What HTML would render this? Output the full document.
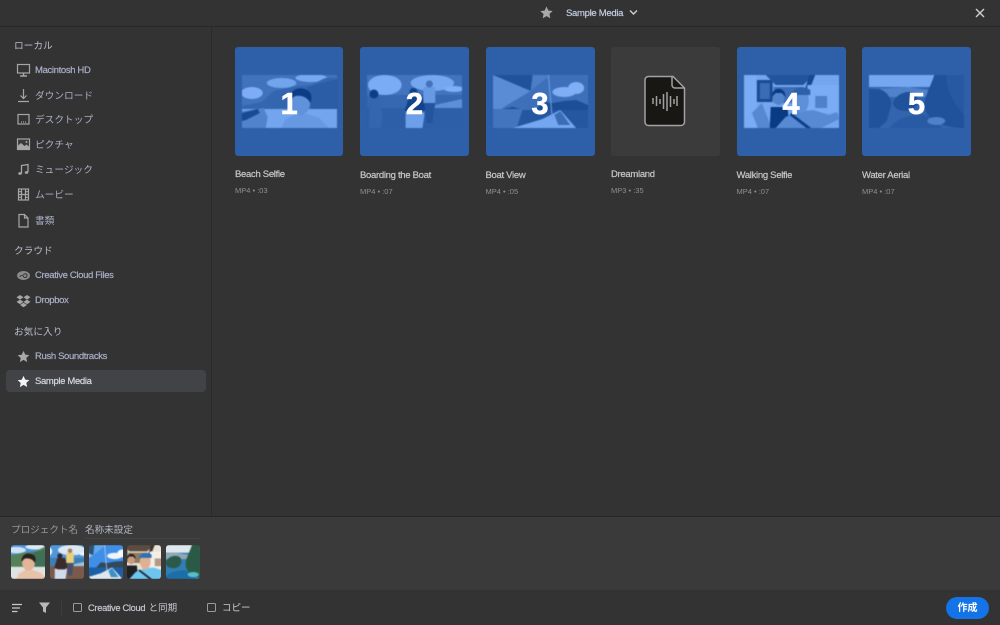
<!DOCTYPE html>
<html lang="ja"><head><meta charset="utf-8"><title>Sample Media</title>
<style>
*{box-sizing:border-box}
html,body{margin:0;padding:0;width:1000px;height:625px;overflow:hidden;background:#333}
body{position:relative;font-family:"Liberation Sans","Noto Sans CJK JP",sans-serif;color:#c6cad8}
.a{position:absolute}
.t{position:absolute;white-space:nowrap;line-height:20px;height:20px;filter:blur(.25px)}
.sec{left:14px;font-size:9.7px;color:#b9bdcb}
.row{left:35px;font-size:9.5px;color:#a9afc6;letter-spacing:-.35px;-webkit-text-stroke:.2px #a9afc6}
.jp{font-size:9.7px;letter-spacing:0;-webkit-text-stroke:0}
.ic{position:absolute;left:15px;width:17px;height:17px;fill:none;stroke:#a6a6a6;stroke-width:1.2}
.tile{position:absolute;top:47px;height:108.5px;border-radius:3px;background:#2e5fa9;isolation:isolate;overflow:hidden}
.tile svg{position:absolute;top:28px;left:7px;width:95px;height:53px;mix-blend-mode:luminosity;opacity:.88;filter:blur(.6px) contrast(.75) brightness(.83)}
.num{position:absolute;top:29.5px;height:53px;line-height:53px;left:0;right:0;text-align:center;color:#fff;font-size:31px;font-weight:bold;-webkit-text-stroke:.5px #fff}
.name{top:166px;font-size:9.5px;color:#c8c8cc;letter-spacing:-.3px;-webkit-text-stroke:.2px #c8c8cc}
.meta{top:181px;font-size:7.5px;color:#8f8f92}
.th{position:absolute;top:544.5px;width:34px;height:34px;border-radius:3px;overflow:hidden}
.th svg{width:61px;height:34px;display:block;margin-left:-14px;filter:blur(.4px)}
.cb{position:absolute;top:603px;width:9px;height:9px;border:1.2px solid #9a9a9a;border-radius:1.5px}
</style></head><body>
<svg width="0" height="0" style="position:absolute">
<defs>
<symbol id="p1" viewBox="0 0 96 53" preserveAspectRatio="none">
<rect width="96" height="53" fill="#4c93dc"/>
<ellipse cx="10" cy="18" rx="11" ry="6" fill="#eef4fa"/><ellipse cx="40" cy="8" rx="15" ry="5" fill="#cfe3f5"/><ellipse cx="70" cy="3" rx="16" ry="4" fill="#dfeaf4"/>
<path d="M0 31 L20 27 L32 16 L50 12 L70 10 L84 3 L96 3 L96 37 L0 37Z" fill="#56805a"/>
<path d="M66 12 L96 4 V35 H70Z" fill="#3f6f55"/>
<rect y="34" width="96" height="19" fill="#dfe4e2"/>
<path d="M0 36 L22 33 L26 42 L24 53 H0Z" fill="#c79a80"/><path d="M0 38 L16 34 L18 38 L4 45 L0 46Z" fill="#3a3a3a"/>
<path d="M40 53 L44 44 L54 39 L66 39 L78 43 L88 53Z" fill="#e8c3aa"/>
<ellipse cx="59" cy="27" rx="10" ry="13" fill="#e3b598"/>
<path d="M48 26 C47 14 58 11 66 15 C71 18 71 24 69 28 C66 22 60 20 54 21 C51 22 50 25 48 26Z" fill="#28221f"/>
</symbol>
<symbol id="p2" viewBox="0 0 96 53" preserveAspectRatio="none">
<rect width="96" height="53" fill="#4f97dd"/>
<ellipse cx="18" cy="10" rx="17" ry="10" fill="#e9f1f8"/><ellipse cx="66" cy="8" rx="22" ry="8" fill="#dce9f5"/><ellipse cx="88" cy="14" rx="10" ry="3" fill="#f0f5fa"/>
<rect y="20" width="96" height="14" fill="#3d7fb4"/><path d="M50 34 L96 24 V34Z" fill="#9dc2d8"/>
<rect y="33" width="96" height="20" fill="#7b5a4c"/>
<path d="M2 53 L3 22 C3 14 12 14 12 22 L16 40 L14 53Z" fill="#4c7a8c"/><circle cx="7" cy="19" r="4.5" fill="#2c2320"/>
<path d="M39 53 L39 34 L46 20 L56 22 L58 40 L56 53Z" fill="#cfdcec"/><path d="M38 36 L43 20 L55 20 L60 34 L55 38 L44 38Z" fill="#3a2b2a"/><circle cx="47" cy="17" r="4" fill="#33272a"/>
<rect x="57" y="12" width="12" height="16" fill="#e8d07a"/><path d="M58 28 H69 L66 48 H60Z" fill="#46506a"/><circle cx="63" cy="9" r="3.6" fill="#a77f63"/>
</symbol>
<symbol id="p3" viewBox="0 0 96 53" preserveAspectRatio="none">
<rect width="96" height="53" fill="#3f8fe8"/>
<path d="M0 0 H58 L38 16 L0 0Z" fill="#62a6ee"/>
<path d="M0 0 H40 L38 16 L0 0Z" fill="#2b5378"/>
<path d="M0 0 L38 16 L8 34 L0 34Z" fill="#90bde6"/>
<ellipse cx="72" cy="17" rx="12" ry="5" fill="#f0f5fa"/><ellipse cx="84" cy="13" rx="8" ry="6" fill="#f4f7fb"/>
<path d="M42 36 L50 27 L60 28 L72 26 L84 25 L96 30 V36Z" fill="#33485a"/><path d="M10 34 L20 32 L28 34Z" fill="#2a4258"/>
<rect y="35" width="96" height="18" fill="#1d5fa6"/>
<path d="M0 34 H30 L24 53 H0Z" fill="#5b96c4"/>
<path d="M20 53 L50 44 L68 35 L84 53Z" fill="#dfe7ee"/><path d="M62 40 L68 36 L78 50 L66 50Z" fill="#3a8fc4"/>
<path d="M56 0 L60 45" stroke="#d9d9d9" stroke-width="1" fill="none"/>
</symbol>
<symbol id="p4" viewBox="0 0 96 53" preserveAspectRatio="none">
<rect width="96" height="53" fill="#e9e2d6"/>
<rect x="0" y="0" width="13" height="53" fill="#f2ede5"/>
<rect x="13" y="5" width="16" height="22" fill="#3a3f3f"/><rect x="16" y="8" width="10" height="16" fill="#6b7f86"/>
<path d="M22 0 H70 L60 10 L32 10Z" fill="#5b4b40"/><path d="M66 0 H72 L64 20 H60Z" fill="#3f352e"/>
<rect x="64" y="10" width="32" height="28" fill="#f2efe8"/><rect x="72" y="21" width="12" height="12" fill="#b49a82"/>
<rect x="30" y="12" width="30" height="16" fill="#8c7a62"/>
<path d="M8 38 L18 28 L28 53 H14Z" fill="#d0a187"/>
<path d="M26 53 L27 32 L44 32 L46 53Z" fill="#1e2023"/><ellipse cx="35" cy="22" rx="6" ry="8" fill="#c89a7e"/><path d="M28 22 C28 11 42 11 42 22 L38 18 L32 18Z" fill="#221c1a"/>
<path d="M32 53 L42 42 L54 37 L70 35 L86 40 L94 37 L96 44 L78 53Z" fill="#6cc6ef"/>
<ellipse cx="57" cy="26" rx="8.5" ry="12" fill="#e1b094"/><path d="M47 22 C48 12 60 10 67 15 L67 20 L50 20Z" fill="#2f6fb4"/>
<path d="M48 38 L68 53 L63 53 L46 40Z" fill="#24272c"/>
</symbol>
<symbol id="p5" viewBox="0 0 96 53" preserveAspectRatio="none">
<rect width="96" height="53" fill="#2f7fb4"/>
<path d="M0 0 H96 V12 H0Z" fill="#dfe8ee"/><path d="M0 14 L40 12 L60 15 L60 22 L0 22Z" fill="#8fa8b4"/>
<path d="M0 53 L0 14 L10 14 C18 16 24 24 22 32 L18 46 L10 53Z" fill="#2f5a47"/>
<path d="M24 28 C28 17 42 14 48 20 C52 28 46 36 38 36 C30 36 26 34 24 28Z" fill="#2c5a4a"/>
<path d="M96 0 L66 0 C62 12 56 22 56 30 C56 44 74 53 96 53Z" fill="#2a5a46"/>
<path d="M78 0 L96 0 V40 C88 30 78 18 78 0Z" fill="#376a50"/>
<path d="M20 53 C30 42 45 38 58 40 L74 53Z" fill="#1c6da8"/><ellipse cx="68" cy="46" rx="9" ry="4" fill="#58bcc9"/>
</symbol>
</defs>
</svg>

<!-- header -->
<div class="a" style="left:0;top:0;width:1000px;height:27px;background:#333;border-bottom:1px solid #282828"></div>
<svg class="a" style="left:540px;top:6px" width="13" height="13" viewBox="0 0 24 24"><path d="M12 1l3.400 7.400 8 .9-6 5.400 1.700 8L12 18.600 4.900 22.800l1.700-8-6-5.400 8-.9z" fill="#a8a8a8"/></svg>
<div class="t" style="left:566px;top:3.500px;font-size:9.500px;color:#c4cde0;letter-spacing:-.3px;-webkit-text-stroke:.2px #c4cde0">Sample Media</div>
<svg class="a" style="left:629px;top:9px" width="9" height="7" viewBox="0 0 9 7"><path d="M1 1.500L4.500 5 8 1.500" fill="none" stroke="#d0d0d0" stroke-width="1.400"/></svg>
<svg class="a" style="left:975px;top:8px" width="10" height="10" viewBox="0 0 10 10"><path d="M1 1L9 9M9 1L1 9" stroke="#cfcfcf" stroke-width="1.400"/></svg>

<!-- sidebar divider -->
<div class="a" style="left:211px;top:27px;width:1px;height:489px;background:#2a2a2a"></div>
<div class="a" style="left:6px;top:370px;width:200px;height:22px;border-radius:4px;background:#424347"></div>

<div class="t sec" style="top:36.500px">ローカル</div>
<div class="t sec" style="top:241.500px">クラウド</div>
<div class="t sec" style="top:322.500px">お気に入り</div>

<div class="t row" style="top:61px">Macintosh HD</div>
<div class="t row jp" style="top:86.500px">ダウンロード</div>
<div class="t row jp" style="top:110.500px">デスクトップ</div>
<div class="t row jp" style="top:135.500px">ピクチャ</div>
<div class="t row jp" style="top:160.500px">ミュージック</div>
<div class="t row jp" style="top:185.500px">ムービー</div>
<div class="t row jp" style="top:211.500px">書類</div>
<div class="t row" style="top:266px">Creative Cloud Files</div>
<div class="t row" style="top:291px">Dropbox</div>
<div class="t row" style="top:347px">Rush Soundtracks</div>
<div class="t row" style="top:372px;color:#d6d9e4;-webkit-text-stroke:.2px #d6d9e4">Sample Media</div>

<!-- sidebar icons -->
<svg class="ic" style="top:62px" viewBox="0 0 17 17"><rect x="2.500" y="2.500" width="12" height="8.500"/><path d="M8.500 11v2.500M5 14h7" stroke-width="1.500"/></svg>
<svg class="ic" style="top:87px" viewBox="0 0 17 17"><path d="M8.500 2v9M5.500 8.500l3 3 3-3M3 14.500h11"/></svg>
<svg class="ic" style="top:111px" viewBox="0 0 17 17"><rect x="3" y="3.500" width="11" height="9.500"/><path d="M6 11h5" stroke-dasharray="1 1"/></svg>
<svg class="ic" style="top:136px" viewBox="0 0 17 17"><rect x="2.500" y="3" width="12" height="10.500" fill="#3a3a3a"/><path d="M2.500 13.500V10l3.500-3 3.500 3 2-1.500 3 2.500v2.500z" fill="#a6a6a6" stroke="none"/><circle cx="11.500" cy="6" r="1" fill="#a6a6a6" stroke="none"/></svg>
<svg class="ic" style="top:161px" viewBox="0 0 17 17"><path d="M6.500 12.500V4.500L13 3.500v7.500" stroke-width="1.300"/><ellipse cx="5" cy="12.500" rx="1.800" ry="1.400" fill="#a6a6a6" stroke="none"/><ellipse cx="11.500" cy="11.500" rx="1.800" ry="1.400" fill="#a6a6a6" stroke="none"/></svg>
<svg class="ic" style="top:186px" viewBox="0 0 17 17"><rect x="3.500" y="3" width="10" height="11"/><path d="M6.500 3v11M10.500 3v11M3.500 8.500h10M3.500 5.700h3M3.500 11.300h3M10.500 5.700h3M10.500 11.300h3"/></svg>
<svg class="ic" style="top:212px" viewBox="0 0 17 17"><path d="M4 2.500h5.500l3.500 3.500v9H4zM9.500 2.500V6H13"/></svg>
<svg class="ic" style="top:267px" viewBox="0 0 17 17"><ellipse cx="8.500" cy="8.500" rx="6.500" ry="4.500" fill="#8a8a8a" stroke="none"/><path d="M5 10c0-2 3-2 3.500-.5S12 11 12 8.500 9 6.500 8.500 8" stroke="#3a3a3a" stroke-width="1"/></svg>
<svg class="ic" style="top:292px" viewBox="0 0 17 17"><path d="M5 3l3.500 2.300L5 7.600 1.500 5.300zM12 3l3.500 2.300L12 7.600 8.500 5.300zM5 7.600l3.500 2.300L5 12.200 1.500 9.900zM12 7.600l3.500 2.300-3.500 2.300-3.500-2.300zM5 13l3.500-2.200 3.500 2.200-3.500 2.200z" fill="#a6a6a6" stroke="none"/></svg>
<svg class="ic" style="top:348px;stroke:none" viewBox="-4.500 -4.500 33 33"><path d="M12 1l3.400 7.400 8 .9-6 5.400 1.700 8L12 18.600 4.900 22.800l1.700-8-6-5.400 8-.9z" fill="#a8a8a8"/></svg>
<svg class="ic" style="top:373px;stroke:none" viewBox="-4.500 -4.500 33 33"><path d="M12 1l3.400 7.400 8 .9-6 5.400 1.700 8L12 18.600 4.900 22.800l1.700-8-6-5.400 8-.9z" fill="#f4f4f4"/></svg>

<!-- tiles -->
<div class="tile" style="left:235px;width:108.300px"><svg><use href="#p1"/></svg><div class="num">1</div></div>
<div class="tile" style="left:360px;width:109px"><svg><use href="#p2"/></svg><div class="num">2</div></div>
<div class="tile" style="left:485.500px;width:109px"><svg><use href="#p3"/></svg><div class="num">3</div></div>
<div class="tile" style="left:611px;width:108.500px;background:#3b3b3b">
<svg style="left:33px;top:28px;width:42px;height:53px;mix-blend-mode:normal;opacity:1;filter:none" viewBox="0 0 42 53"><path d="M4.500 1.500H29L40.500 13V47a3.500 3.500 0 0 1-3.500 3.500H4.500A3.500 3.500 0 0 1 1 47V5a3.500 3.500 0 0 1 3.500-3.500z" fill="#181714" stroke="#a3a3a3" stroke-width="1.500"/><path d="M28 2v8a3 3 0 0 0 3 3h9" fill="none" stroke="#a3a3a3" stroke-width="1.500"/><path d="M9 23v6M12.500 21v10M16 24v5M19.500 19v15M23 17v19M26.500 21v11M30 24v5M33 21v10" stroke="#a0a0a0" stroke-width="1.500" fill="none"/></svg></div>
<div class="tile" style="left:736.500px;width:109px"><svg><use href="#p4"/></svg><div class="num">4</div></div>
<div class="tile" style="left:862px;width:109px"><svg><use href="#p5"/></svg><div class="num">5</div></div>

<div class="t name" style="left:235px;top:165px">Beach Selfie</div><div class="t meta" style="left:235px;top:180.500px">MP4 • :03</div>
<div class="t name" style="left:360px">Boarding the Boat</div><div class="t meta" style="left:360px;top:181.500px">MP4 • :07</div>
<div class="t name" style="left:485.500px">Boat View</div><div class="t meta" style="left:485.500px;top:181.500px">MP4 • :05</div>
<div class="t name" style="left:611px;top:165px">Dreamland</div><div class="t meta" style="left:611px;top:180.500px">MP3 • :35</div>
<div class="t name" style="left:736.500px">Walking Selfie</div><div class="t meta" style="left:736.500px;top:181.500px">MP4 • :07</div>
<div class="t name" style="left:862px">Water Aerial</div><div class="t meta" style="left:862px;top:181.500px">MP4 • :07</div>

<!-- project panel -->
<div class="a" style="left:0;top:516px;width:1000px;height:74px;background:#3a3a3a;border-top:1px solid #272727"></div>
<div class="t" style="left:11px;top:520.500px;font-size:9.600px;color:#979797">プロジェクト名</div>
<div class="t" style="left:85px;top:520.500px;font-size:9.600px;color:#b4b8c6">名称未設定</div>
<div class="a" style="left:85px;top:538px;width:115px;height:1px;background:#444"></div>
<div class="th" style="left:11px"><svg style="margin-left:-20px"><use href="#p1"/></svg></div>
<div class="th" style="left:50px"><svg style="margin-left:-20px"><use href="#p2"/></svg></div>
<div class="th" style="left:88.500px"><svg style="margin-left:-20px"><use href="#p3"/></svg></div>
<div class="th" style="left:127px"><svg style="margin-left:-18px"><use href="#p4"/></svg></div>
<div class="th" style="left:166px"><svg style="margin-left:-16px"><use href="#p5"/></svg></div>

<!-- bottom bar -->
<div class="a" style="left:0;top:590px;width:1000px;height:35px;background:#333"></div>
<svg class="a" style="left:11px;top:603px" width="12" height="10" viewBox="0 0 12 10"><path d="M1 1.500h10M1 5h8M1 8.500h5.500" stroke="#c8c8c8" stroke-width="1.300"/></svg>
<svg class="a" style="left:38px;top:601px" width="13" height="13" viewBox="0 0 13 13"><path d="M1 1.500h11L8 6.500V12L5 10.500v-4z" fill="#b8b8b8"/></svg>
<div class="a" style="left:61px;top:600px;width:1px;height:15px;background:#3d3d3d"></div>
<div class="cb" style="left:73px"></div>
<div class="t" style="left:88px;top:598px;font-size:9.300px;color:#c6c8d0;letter-spacing:-.3px;-webkit-text-stroke:.2px #c6c8d0">Creative Cloud <span style="font-size:9.500px;letter-spacing:0;-webkit-text-stroke:0;margin-left:1px">と同期</span></div>
<div class="cb" style="left:207px"></div>
<div class="t" style="left:222px;top:598.500px;font-size:9.500px;color:#c6c8d0">コピー</div>
<div class="a" style="left:946px;top:597px;width:43px;height:22px;border-radius:11px;background:#1473e6"></div>
<div class="t" style="left:946px;width:43px;text-align:center;top:598.500px;font-size:10px;font-weight:bold;color:#fff">作成</div>
</body></html>
